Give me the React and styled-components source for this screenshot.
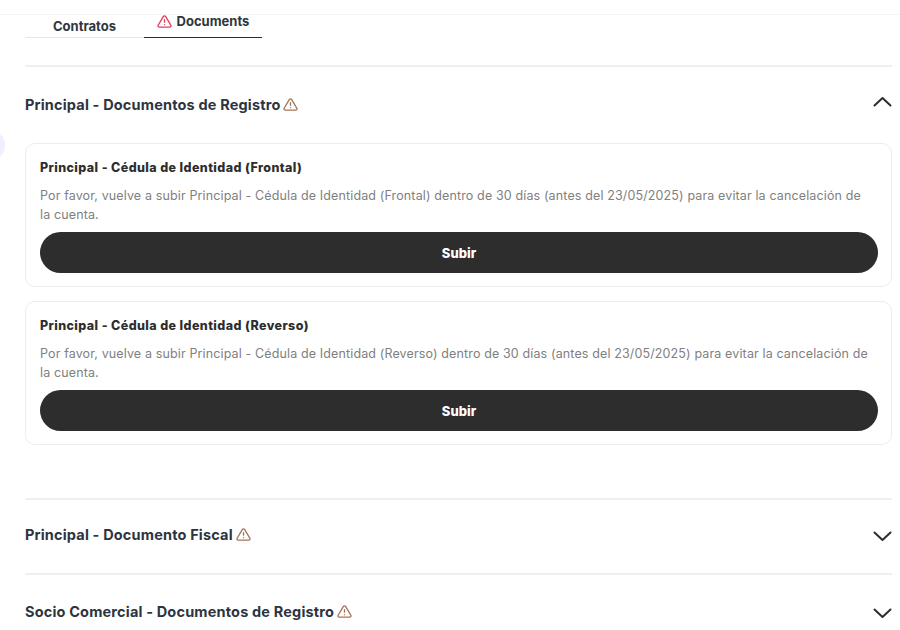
import React from "react";
import styled, { createGlobalStyle } from "styled-components";

const GlobalStyle = createGlobalStyle`
  html, body {
    margin: 0;
    padding: 0;
    background: #fff;
    overflow: hidden;
  }
  body {
    font-family: "Inter", "Liberation Sans", sans-serif;
    color: #2d2d2d;
  }
`;

const Page = styled.div`
  position: relative;
  width: 900px;
  height: 630px;
  overflow: hidden;
  box-sizing: border-box;
  padding: 14px 8px 0 25px;
`;

const TopLine = styled.div`
  position: absolute;
  top: 14px;
  left: 0;
  right: 0;
  height: 1px;
  background: #f5f5f5;
`;

const SideBlob = styled.div`
  position: absolute;
  left: -26px;
  top: 130px;
  width: 31px;
  height: 31px;
  border-radius: 50%;
  background: #eef0fd;
`;

const Tabs = styled.div`
  display: flex;
  width: 237px;
  height: 24px;
  margin-bottom: 27px;
`;

const Tab = styled.div`
  flex: 0 0 ${(p) => p.$width}px;
  box-sizing: border-box;
  display: flex;
  justify-content: center;
  align-items: ${(p) => (p.$active ? "flex-start" : "center")};
  gap: 5px;
  padding-top: ${(p) => (p.$active ? "0" : "2px")};
  font-size: 13px;
  line-height: 15px;
  font-weight: 700;
  color: #2f3640;
  border-bottom: ${(p) => (p.$active ? "1px solid #2d2d2d" : "1px solid #e6e6e6")};
`;

const Section = styled.section`
  border-top: 2px solid #efefef;
`;

const SectionHead = styled.div`
  display: flex;
  align-items: center;
  justify-content: space-between;
  height: ${(p) => p.$height}px;
`;

const SectionTitle = styled.h3`
  display: flex;
  align-items: center;
  gap: 3px;
  margin: 0 0 ${(p) => p.$lift}px;
  font-size: 14.5px;
  font-weight: 700;
  letter-spacing: 0.17px;
  color: #2c3440;
`;

const ChevronIcon = styled.svg`
  margin-bottom: ${(p) => p.$lift}px;
`;

const Cards = styled.div`
  display: flex;
  flex-direction: column;
  gap: 14px;
  padding-bottom: 53px;
`;

const Card = styled.div`
  box-sizing: border-box;
  height: 144px;
  padding: 16px 13px 12px 14px;
  border: 1px solid #ececec;
  border-radius: 10px;
  background: #fff;
`;

const CardTitle = styled.h4`
  margin: 0 0 10px;
  height: 16px;
  line-height: 16px;
  font-size: 12.5px;
  font-weight: 800;
  letter-spacing: 0.4px;
  color: #2d2d2d;
`;

const CardText = styled.p`
  margin: 0 0 8px;
  padding-right: 9px;
  font-size: 12.5px;
  letter-spacing: 0.13px;
  line-height: 19px;
  color: #808080;
`;

const UploadButton = styled.button`
  display: block;
  width: 100%;
  height: 41px;
  border: 0;
  border-radius: 21px;
  background: #2d2d2d;
  color: #fff;
  font-family: "Inter", "Liberation Sans", sans-serif;
  font-size: 13px;
  font-weight: 800;
  cursor: pointer;
`;

const Warning = ({ size = 15, color = "#a5765a" }) => (
  <svg width={size} height={size} viewBox="0 0 24 24" fill="none" stroke={color} strokeWidth="2.2" strokeLinecap="round" strokeLinejoin="round">
    <path d="M10.3 3.9 1.8 18a2 2 0 0 0 1.7 3h17a2 2 0 0 0 1.7-3L13.7 3.9a2 2 0 0 0-3.4 0z" />
    <path d="M12 9v4" />
    <path d="M12 17h.01" />
  </svg>
);

const Chevron = ({ up, lift = 0 }) => (
  <ChevronIcon $lift={lift} width="19" height="11" viewBox="0 0 19 11" fill="none" stroke="#2d2d2d" strokeWidth="2" strokeLinecap="round" strokeLinejoin="round">
    <path d={up ? "M1.5 9.5 9.5 2l8 7.5" : "M1.5 1.5 9.5 9l8-7.5"} />
  </ChevronIcon>
);

const documents = ["Frontal", "Reverso"];

export default function App() {
  return (
    <Page>
      <GlobalStyle />
      <TopLine />
      <SideBlob />
      <Tabs>
        <Tab $width={119}>Contratos</Tab>
        <Tab $width={118} $active>
          <Warning color="#e0405e" />
          Documents
        </Tab>
      </Tabs>

      <Section>
        <SectionHead $height={76}>
          <SectionTitle $lift={2}>
            Principal - Documentos de Registro <Warning />
          </SectionTitle>
          <Chevron up lift={7} />
        </SectionHead>
        <Cards>
          {documents.map((side) => (
            <Card key={side}>
              <CardTitle>{`Principal - Cédula de Identidad (${side})`}</CardTitle>
              <CardText>
                {`Por favor, vuelve a subir Principal - Cédula de Identidad (${side}) dentro de 30 días (antes del 23/05/2025) para evitar la cancelación de la cuenta.`}
              </CardText>
              <UploadButton>Subir</UploadButton>
            </Card>
          ))}
        </Cards>
      </Section>

      <Section>
        <SectionHead $height={73}>
          <SectionTitle $lift={5}>
            Principal - Documento Fiscal <Warning />
          </SectionTitle>
          <Chevron />
        </SectionHead>
      </Section>

      <Section>
        <SectionHead $height={76}>
          <SectionTitle $lift={3}>
            Socio Comercial - Documentos de Registro <Warning />
          </SectionTitle>
          <Chevron />
        </SectionHead>
      </Section>
    </Page>
  );
}
